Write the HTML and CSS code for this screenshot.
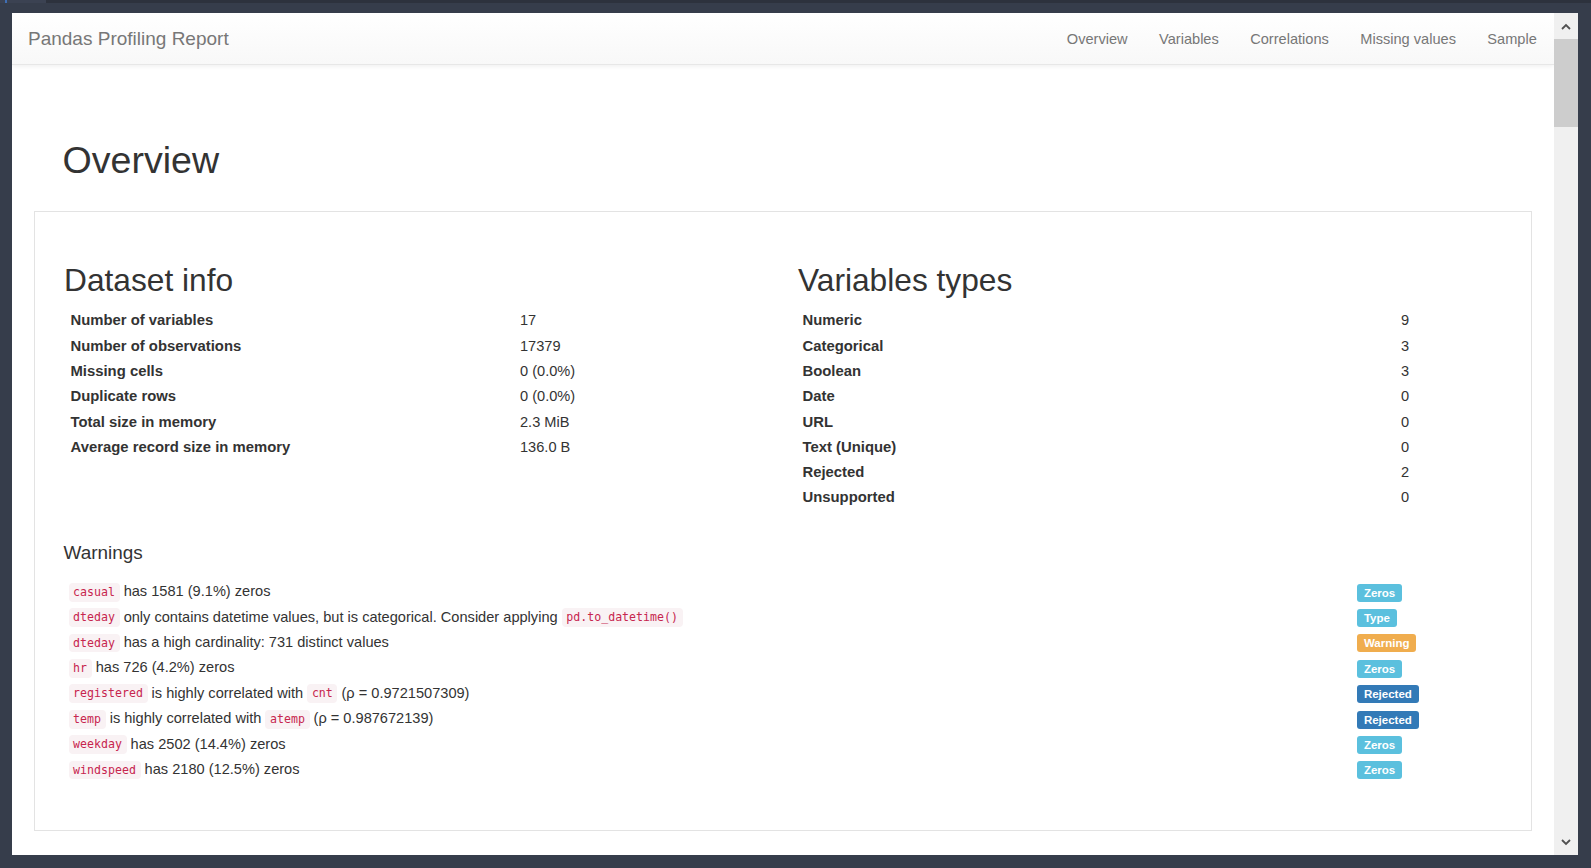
FILE: index.html
```html
<!DOCTYPE html>
<html lang="en">
<head>
<meta charset="utf-8">
<title>Pandas Profiling Report</title>
<link rel="stylesheet" href="styles.css">
</head>
<body>
<div class="topstrip"><div class="tab"><div class="tabmark"></div></div></div>
<div class="frame">
  <div class="viewport">
    <nav class="navbar">
      <a class="brand" href="#">Pandas Profiling Report</a>
      <ul class="nav">
        <li><a href="#overview">Overview</a></li>
        <li><a href="#variables">Variables</a></li>
        <li><a href="#correlations">Correlations</a></li>
        <li><a href="#missing">Missing values</a></li>
        <li><a href="#sample">Sample</a></li>
      </ul>
    </nav>
    <main class="page">
      <h1 class="page-title">Overview</h1>
      <section class="box">
        <div class="cols">
          <div class="col">
            <h2 class="sub">Dataset info</h2>
            <table class="stats stats-left">
              <tr><th>Number of variables</th><td>17</td></tr>
              <tr><th>Number of observations</th><td>17379</td></tr>
              <tr><th>Missing cells</th><td>0 (0.0%)</td></tr>
              <tr><th>Duplicate rows</th><td>0 (0.0%)</td></tr>
              <tr><th>Total size in memory</th><td>2.3 MiB</td></tr>
              <tr><th>Average record size in memory</th><td>136.0 B</td></tr>
            </table>
          </div>
          <div class="col">
            <h2 class="sub">Variables types</h2>
            <table class="stats stats-right">
              <tr><th>Numeric</th><td>9</td></tr>
              <tr><th>Categorical</th><td>3</td></tr>
              <tr><th>Boolean</th><td>3</td></tr>
              <tr><th>Date</th><td>0</td></tr>
              <tr><th>URL</th><td>0</td></tr>
              <tr><th>Text (Unique)</th><td>0</td></tr>
              <tr><th>Rejected</th><td>2</td></tr>
              <tr><th>Unsupported</th><td>0</td></tr>
            </table>
          </div>
        </div>
        <h4 class="warn-title">Warnings</h4>
        <table class="warnings">
          <tr><td><code>casual</code> has 1581 (9.1%) zeros</td><td class="tag"><span class="label info">Zeros</span></td></tr>
          <tr><td><code>dteday</code> only contains datetime values, but is categorical. Consider applying <code>pd.to_datetime()</code></td><td class="tag"><span class="label info">Type</span></td></tr>
          <tr><td><code>dteday</code> has a high cardinality: 731 distinct values</td><td class="tag"><span class="label warning">Warning</span></td></tr>
          <tr><td><code>hr</code> has 726 (4.2%) zeros</td><td class="tag"><span class="label info">Zeros</span></td></tr>
          <tr><td><code>registered</code> is highly correlated with <code>cnt</code> (ρ = 0.9721507309)</td><td class="tag"><span class="label primary">Rejected</span></td></tr>
          <tr><td><code>temp</code> is highly correlated with <code>atemp</code> (ρ = 0.987672139)</td><td class="tag"><span class="label primary">Rejected</span></td></tr>
          <tr><td><code>weekday</code> has 2502 (14.4%) zeros</td><td class="tag"><span class="label info">Zeros</span></td></tr>
          <tr><td><code>windspeed</code> has 2180 (12.5%) zeros</td><td class="tag"><span class="label info">Zeros</span></td></tr>
        </table>
      </section>
    </main>
  </div>
  <div class="scrollbar">
    <div class="sb-btn"><svg width="10" height="7" viewBox="0 0 10 7"><path d="M1 6 L5 2 L9 6" stroke="#505050" stroke-width="1.8" fill="none"/></svg></div>
    <div class="sb-thumb"></div>
    <div class="sb-track"></div>
    <div class="sb-btn"><svg width="10" height="7" viewBox="0 0 10 7"><path d="M1 1 L5 5 L9 1" stroke="#505050" stroke-width="1.8" fill="none"/></svg></div>
  </div>
</div>
</body>
</html>
```
FILE: styles.css
```css
* { box-sizing: border-box; }
html, body { margin: 0; height: 100%; }
body {
  background: #363d4b;
  font-family: "Liberation Sans", Arial, sans-serif;
  color: #333;
  overflow: hidden;
}
.topstrip { height: 3px; background: #2d323d; display: flex; }
.tab { width: 46px; background: #3b4252; padding-left: 5px; }
.tabmark { width: 2px; height: 3px; background: #3f6fb5; }

.frame { display: flex; margin: 10px 13px 0 12px; height: 842px; }
.viewport {
  flex: 1;
  background: #fff;
  display: flex;
  flex-direction: column;
  overflow: hidden;
}
.navbar {
  flex: none;
  height: 52px;
  display: flex;
  align-items: center;
  justify-content: space-between;
  padding: 1px 1.5px 0 16px;
  background: linear-gradient(to bottom, #fff 0, #f8f8f8 100%);
  border-bottom: 1px solid #e7e7e7;
  box-shadow: 0 1px 5px rgba(0,0,0,.075);
  position: relative;
  z-index: 1;
}
.brand { font-size: 19px; color: #777; text-decoration: none; line-height: 20px; }
.nav { display: flex; list-style: none; margin: 0; padding: 0; }
.nav a {
  display: block;
  padding: 0 15.7px;
  font-size: 14.6px;
  line-height: 20.9px;
  color: #777;
  text-decoration: none;
}

.page { padding: 74.7px 22px 0 21.5px; }
.page-title {
  font-size: 37.6px;
  line-height: 41.25px;
  font-weight: 500;
  margin: 0 0 30px 29px;
  color: #333;
}
.box {
  border: 1px solid #e3e3e3;
  padding: 50.9px 30px 48px 30px;
}
.cols { display: grid; grid-template-columns: 702.5px 702.5px; column-gap: 31.5px; }
.sub {
  font-size: 31.7px;
  line-height: 34.1px;
  font-weight: 500;
  margin: 0 0 11.3px -0.5px;
}
.stats, .warnings {
  border-collapse: collapse;
  width: 100%;
  font-size: 14.6px;
  line-height: 20.9px;
}
.stats th, .stats td, .warnings td {
  padding: 2.2px 6px;
  text-align: left;
  vertical-align: top;
}
.warnings td { padding: 2.25px 6px; }
.stats th { font-weight: bold; font-size: 14.85px; }
.stats-left th { width: 449.5px; }
.stats-right { margin-left: -2px; width: calc(100% + 2px); }
.stats-right th { width: 598.5px; }

.warn-title {
  font-size: 18.9px;
  line-height: 20.9px;
  font-weight: 500;
  margin: 33px 0 14.5px -1px;
}
.warnings { margin-left: -2px; width: calc(100% + 2px); }
.warnings td.tag { width: 150px; }
code {
  font-family: "DejaVu Sans Mono", monospace;
  font-size: 11.6px;
  line-height: 1;
  padding: 2.4px 4.6px;
  color: #c7254e;
  background: #f9f2f4;
  border-radius: 4px;
}
.label {
  display: inline;
  font-size: 11.5px;
  font-weight: bold;
  line-height: 1;
  color: #fff;
  padding: .22em .6em .3em;
  border-radius: 3px;
  white-space: nowrap;
}
.label.info { background: #5bc0de; }
.label.warning { background: #f0ad4e; }
.label.primary { background: #337ab7; }

.scrollbar {
  width: 24px;
  background: #f0f0f0;
  display: flex;
  flex-direction: column;
}
.sb-btn { height: 26px; display: flex; align-items: center; justify-content: center; flex: none; }
.sb-thumb { height: 88px; background: #cdcdcd; flex: none; }
.sb-track { flex: 1; }
```
